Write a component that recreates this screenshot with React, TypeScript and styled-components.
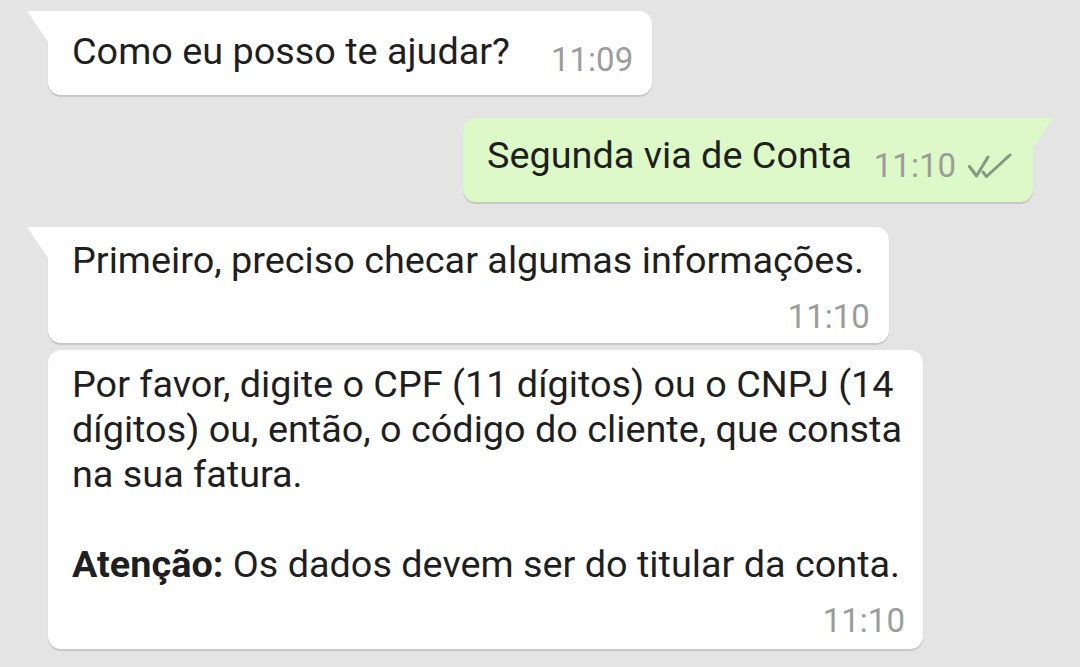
import React from "react";
import styled, { createGlobalStyle, css } from "styled-components";

const Global = createGlobalStyle`
  html, body { margin: 0; padding: 0; background: #e4e4e4; }
  body { font-family: Roboto, "Noto Sans", "Liberation Sans", sans-serif; }
`;

const Page = styled.div`
  width: 1080px;
  height: 667px;
  box-sizing: border-box;
  padding: 11px 47px 0 48px;
  display: flex;
  flex-direction: column;
  overflow: hidden;
  background: #e4e4e4;
`;

const Bubble = styled.div<{ $out?: boolean; $tail?: boolean; $gap: number }>`
  position: relative;
  margin-top: ${(p) => p.$gap}px;
  align-self: ${(p) => (p.$out ? "flex-end" : "flex-start")};
  background: ${(p) => (p.$out ? "#ddf9c7" : "#ffffff")};
  border-radius: 13px;
  box-shadow: 0 1.5px 1px rgba(0, 0, 0, 0.13);
  color: #1f1f1f;
  font-size: 37.8px;
  line-height: 45px;
  ${(p) =>
    p.$tail &&
    (p.$out
      ? css`
          border-top-right-radius: 0;
          &::before {
            content: "";
            position: absolute;
            top: 0;
            right: -20px;
            width: 20px;
            height: 30px;
            background: #ddf9c7;
            clip-path: polygon(0 0, 100% 0, 0 100%);
          }
        `
      : css`
          border-top-left-radius: 0;
          &::before {
            content: "";
            position: absolute;
            top: 0;
            left: -21px;
            width: 21px;
            height: 31px;
            background: #ffffff;
            clip-path: polygon(0 0, 100% 0, 100% 100%);
          }
        `)}
`;

const InlineRow = styled.div<{ $pad: string }>`
  display: flex;
  align-items: baseline;
  padding: ${(p) => p.$pad};
`;

const Text = styled.div<{ $pad?: string }>`
  padding: ${(p) => p.$pad || "0"};
  white-space: nowrap;
`;

const Meta = styled.div<{ $ml: number; $drop: number }>`
  display: flex;
  align-items: center;
  gap: 12px;
  margin-left: ${(p) => p.$ml}px;
  position: relative;
  top: ${(p) => p.$drop}px;
`;

const Time = styled.span`
  font-size: 33px;
  line-height: 45px;
  color: #9c9c9c;
`;

const BlockMeta = styled.div<{ $pad: string }>`
  display: flex;
  justify-content: flex-end;
  padding: ${(p) => p.$pad};
`;

const Bold = styled.b`
  font-weight: 700;
`;

const Checks = () => (
  <svg width="44" height="26" viewBox="0 0 44 26" fill="none">
    <path
      d="M1.5 13.5 L8.5 23 L20 4"
      stroke="#86987f"
      strokeWidth="3"
      strokeLinecap="round"
      strokeLinejoin="round"
    />
    <path
      d="M15 19 L18.5 23.5 L42 2"
      stroke="#86987f"
      strokeWidth="3"
      strokeLinecap="round"
      strokeLinejoin="round"
    />
  </svg>
);

export default function App() {
  return (
    <>
      <Global />
      <Page>
        <Bubble $tail $gap={0}>
          <InlineRow $pad="18px 19px 20px 24px">
            <Text>Como eu posso te ajudar?</Text>
            <Meta $ml={41} $drop={7}>
              <Time>11:09</Time>
            </Meta>
          </InlineRow>
        </Bubble>

        <Bubble $out $tail $gap={23}>
          <InlineRow $pad="15px 21px 23px 24px">
            <Text>Segunda via de Conta</Text>
            <Meta $ml={22} $drop={9}>
              <Time>11:10</Time>
              <Checks />
            </Meta>
          </InlineRow>
        </Bubble>

        <Bubble $tail $gap={25}>
          <Text $pad="11px 25px 0 24px">Primeiro, preciso checar algumas informações.</Text>
          <BlockMeta $pad="11px 19px 4px 24px">
            <Time>11:10</Time>
          </BlockMeta>
        </Bubble>

        <Bubble $gap={7}>
          <Text $pad="12px 21px 0 24px">
            Por favor, digite o CPF (11 dígitos) ou o CNPJ (14
            <br />
            dígitos) ou, então, o código do cliente, que consta
            <br />
            na sua fatura.
            <br />
            <br />
            <Bold>Atenção:</Bold> Os dados devem ser do titular da conta.
          </Text>
          <BlockMeta $pad="11px 18px 6px 24px">
            <Time>11:10</Time>
          </BlockMeta>
        </Bubble>
      </Page>
    </>
  );
}
